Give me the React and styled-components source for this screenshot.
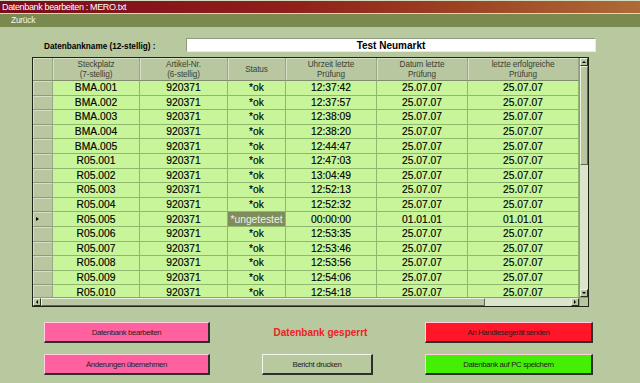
import React from "react";
import styled, { createGlobalStyle } from "styled-components";

const GlobalStyle = createGlobalStyle`
  html, body {
    margin: 0;
    padding: 0;
    background: #b8c89f;
    font-family: "Liberation Sans", Arial, sans-serif;
  }
`;

const rows = [
  ["BMA.001", "12:37:42"],
  ["BMA.002", "12:37:57"],
  ["BMA.003", "12:38:09"],
  ["BMA.004", "12:38:20"],
  ["BMA.005", "12:44:47"],
  ["R05.001", "12:47:03"],
  ["R05.002", "13:04:49"],
  ["R05.003", "12:52:13"],
  ["R05.004", "12:52:32"],
  ["R05.005", "00:00:00", true],
  ["R05.006", "12:53:35"],
  ["R05.007", "12:53:46"],
  ["R05.008", "12:53:56"],
  ["R05.009", "12:54:06"],
  ["R05.010", "12:54:18"],
];

const columns = "20px 87px 88px 58px 91px 91px 111px";

const Page = styled.div`
  width: 640px;
  height: 383px;
  overflow: hidden;
`;

const TitleBar = styled.div`
  height: 12px;
  border-top: 1px solid #d4dcc4;
  border-bottom: 1px solid #d4dcc4;
  background: linear-gradient(90deg, #7c0b1c 0%, #8f1f1a 45%, #9c3f22 70%, #ad6b37 100%);
  color: #fff;
  font-size: 9px;
  line-height: 12px;
  padding-left: 2px;
  letter-spacing: -0.35px;
`;

const MenuBar = styled.div`
  height: 13px;
  background: #7a8a4f;
  color: #f4f6ee;
  font-size: 8.5px;
  line-height: 13px;
  padding-left: 11px;
  letter-spacing: -0.3px;
`;

const NameRow = styled.div`
  display: flex;
  align-items: center;
  margin-top: 11px;
  padding-left: 44px;
  height: 14px;
`;

const NameLabel = styled.div`
  width: 142px;
  font-size: 8.2px;
  font-weight: bold;
  color: #000;
  padding-top: 2px;
`;

const NameInput = styled.div`
  width: 408px;
  height: 12px;
  background: #fff;
  border: 1px solid #8e9a7c;
  border-right-color: #e8eedc;
  border-bottom-color: #e8eedc;
  text-align: center;
  font-size: 10px;
  font-weight: bold;
  line-height: 13px;
  color: #000;
`;

const Frame = styled.div`
  margin: 5px 0 0 32px;
  width: 555px;
  height: 248px;
  border: 1px solid #1e2418;
  display: grid;
  grid-template-columns: 546px 9px;
  grid-template-rows: 239px 9px;
`;

const DataArea = styled.div`
  display: flex;
  flex-direction: column;
  overflow: hidden;
  background: #b8c7a0;
`;

const HeaderRow = styled.div`
  display: grid;
  grid-template-columns: ${columns};
  height: 23px;
  flex: none;
`;

const HeaderCell = styled.div`
  display: flex;
  align-items: center;
  justify-content: center;
  text-align: center;
  font-size: 8.2px;
  line-height: 10px;
  color: #3a3f34;
  border-right: 1px solid #98a786;
  border-bottom: 1px solid #7f8d6c;
  box-shadow: inset 1px 1px 0 #d6e0c6;
  white-space: pre-line;
  padding-top: 1px;
  letter-spacing: -0.1px;
`;

const Body = styled.div`
  flex: 1;
  overflow: hidden;
`;

const Row = styled.div`
  display: grid;
  grid-template-columns: ${columns};
  height: 14.6px;
`;

const RowMarker = styled.div`
  position: relative;
  background: #b8c7a0;
  border-right: 1px solid #98a786;
  border-bottom: 1px solid #8e9c7c;
  box-shadow: inset 1px 1px 0 #d6e0c6;
  ${(p) =>
    p.$current &&
    `&::after {
      content: "";
      position: absolute;
      left: 3px;
      top: 5px;
      border-left: 3px solid #000;
      border-top: 2.5px solid transparent;
      border-bottom: 2.5px solid transparent;
    }`}
`;

const Cell = styled.div`
  display: flex;
  align-items: center;
  justify-content: center;
  font-size: 10.3px;
  color: ${(p) => (p.$muted ? "#eef2e2" : "#000")};
  -webkit-text-stroke: ${(p) => (p.$muted ? "0" : "0.15px #000")};
  background: ${(p) => (p.$muted ? "#7f8c5c" : "#c8f59a")};
  border-right: 1px solid #8fb86c;
  border-bottom: 1px solid #8fb86c;
  overflow: hidden;
  white-space: nowrap;
`;

const ScrollTrack = styled.div`
  display: flex;
  flex-direction: ${(p) => (p.$vertical ? "column" : "row")};
  background: #dbe5cc;
  border-left: ${(p) => (p.$vertical ? "1px solid #8e9c7c" : "none")};
  border-top: ${(p) => (p.$vertical ? "none" : "1px solid #8e9c7c")};
`;

const ScrollButton = styled.div`
  flex: none;
  width: 8px;
  height: 8px;
  background: #b8c7a0;
  box-sizing: border-box;
  border: 1px solid #eef2e4;
  border-right-color: #2a3020;
  border-bottom-color: #2a3020;
  display: flex;
  align-items: center;
  justify-content: center;
  &::after {
    content: "";
    ${(p) =>
      ({
        up: "border-bottom: 2px solid #000; border-left: 2.5px solid transparent; border-right: 2.5px solid transparent;",
        down: "border-top: 2px solid #000; border-left: 2.5px solid transparent; border-right: 2.5px solid transparent;",
        left: "border-right: 2px solid #000; border-top: 2.5px solid transparent; border-bottom: 2.5px solid transparent;",
        right: "border-left: 2px solid #000; border-top: 2.5px solid transparent; border-bottom: 2.5px solid transparent;",
      })[p.$dir]}
  }
`;

const Thumb = styled.div`
  flex: none;
  box-sizing: border-box;
  background: #b8c7a0;
  border: 1px solid #eef2e4;
  border-right-color: #5e6a4c;
  border-bottom-color: #5e6a4c;
`;

const Gap = styled.div`
  flex: 1;
`;

const Corner = styled.div`
  background: #b8c7a0;
  border-left: 1px solid #8e9c7c;
  border-top: 1px solid #8e9c7c;
`;

const Actions = styled.div`
  display: grid;
  grid-template-columns: 166px 111px 168px;
  grid-template-rows: 21px 21px;
  column-gap: 52px;
  row-gap: 11px;
  margin: 15px 0 0 44px;
`;

const palette = {
  pink: "#ff619e",
  red: "#ff1729",
  green: "#45ef05",
  plain: "#b8c89f",
};

const ActionButton = styled.div`
  box-sizing: border-box;
  display: flex;
  align-items: center;
  justify-content: center;
  background: ${(p) => palette[p.$tone]};
  border: 1px solid ${(p) => (p.$tone === "plain" ? "#f2f6ea" : "#ffd0e0")};
  border-right: 2px solid #2e2e2a;
  border-bottom: 2px solid #2e2e2a;
  font-size: 7.8px;
  color: #1e1e1e;
  letter-spacing: -0.35px;
`;

const LockNotice = styled.div`
  align-self: center;
  justify-self: center;
  white-space: nowrap;
  font-size: 10px;
  font-weight: bold;
  color: #ec1d24;
  margin-left: 6px;
`;

export default function App() {
  return (
    <Page>
      <GlobalStyle />
      <TitleBar>Datenbank bearbeiten : MERO.txt</TitleBar>
      <MenuBar>Zurück</MenuBar>
      <NameRow>
        <NameLabel>Datenbankname (12-stellig) :</NameLabel>
        <NameInput>Test Neumarkt</NameInput>
      </NameRow>

      <Frame>
        <DataArea>
          <HeaderRow>
            <HeaderCell />
            <HeaderCell>{"Steckplatz\n(7-stellig)"}</HeaderCell>
            <HeaderCell>{"Artikel-Nr.\n(6-stellig)"}</HeaderCell>
            <HeaderCell>Status</HeaderCell>
            <HeaderCell>{"Uhrzeit letzte\nPrüfung"}</HeaderCell>
            <HeaderCell>{"Datum letzte\nPrüfung"}</HeaderCell>
            <HeaderCell>{"letzte erfolgreiche\nPrüfung"}</HeaderCell>
          </HeaderRow>
          <Body>
            {rows.map(([slot, time, untested]) => {
              const date = untested ? "01.01.01" : "25.07.07";
              return (
                <Row key={slot}>
                  <RowMarker $current={untested} />
                  <Cell>{slot}</Cell>
                  <Cell>920371</Cell>
                  <Cell $muted={untested}>{untested ? "*ungetestet" : "*ok"}</Cell>
                  <Cell>{time}</Cell>
                  <Cell>{date}</Cell>
                  <Cell>{date}</Cell>
                </Row>
              );
            })}
          </Body>
        </DataArea>

        <ScrollTrack $vertical>
          <ScrollButton $dir="up" />
          <Thumb style={{ height: 99, width: 8 }} />
          <Gap />
          <ScrollButton $dir="down" />
        </ScrollTrack>

        <ScrollTrack>
          <ScrollButton $dir="left" />
          <Thumb style={{ width: 444, height: 8 }} />
          <Gap />
          <ScrollButton $dir="right" />
        </ScrollTrack>
        <Corner />
      </Frame>

      <Actions>
        <ActionButton $tone="pink">Datenbank bearbeiten</ActionButton>
        <LockNotice>Datenbank gesperrt</LockNotice>
        <ActionButton $tone="red">An Handlesegerät senden</ActionButton>
        <ActionButton $tone="pink">Änderungen übernehmen</ActionButton>
        <ActionButton $tone="plain">Bericht drucken</ActionButton>
        <ActionButton $tone="green">Datenbank auf PC speichern</ActionButton>
      </Actions>
    </Page>
  );
}
